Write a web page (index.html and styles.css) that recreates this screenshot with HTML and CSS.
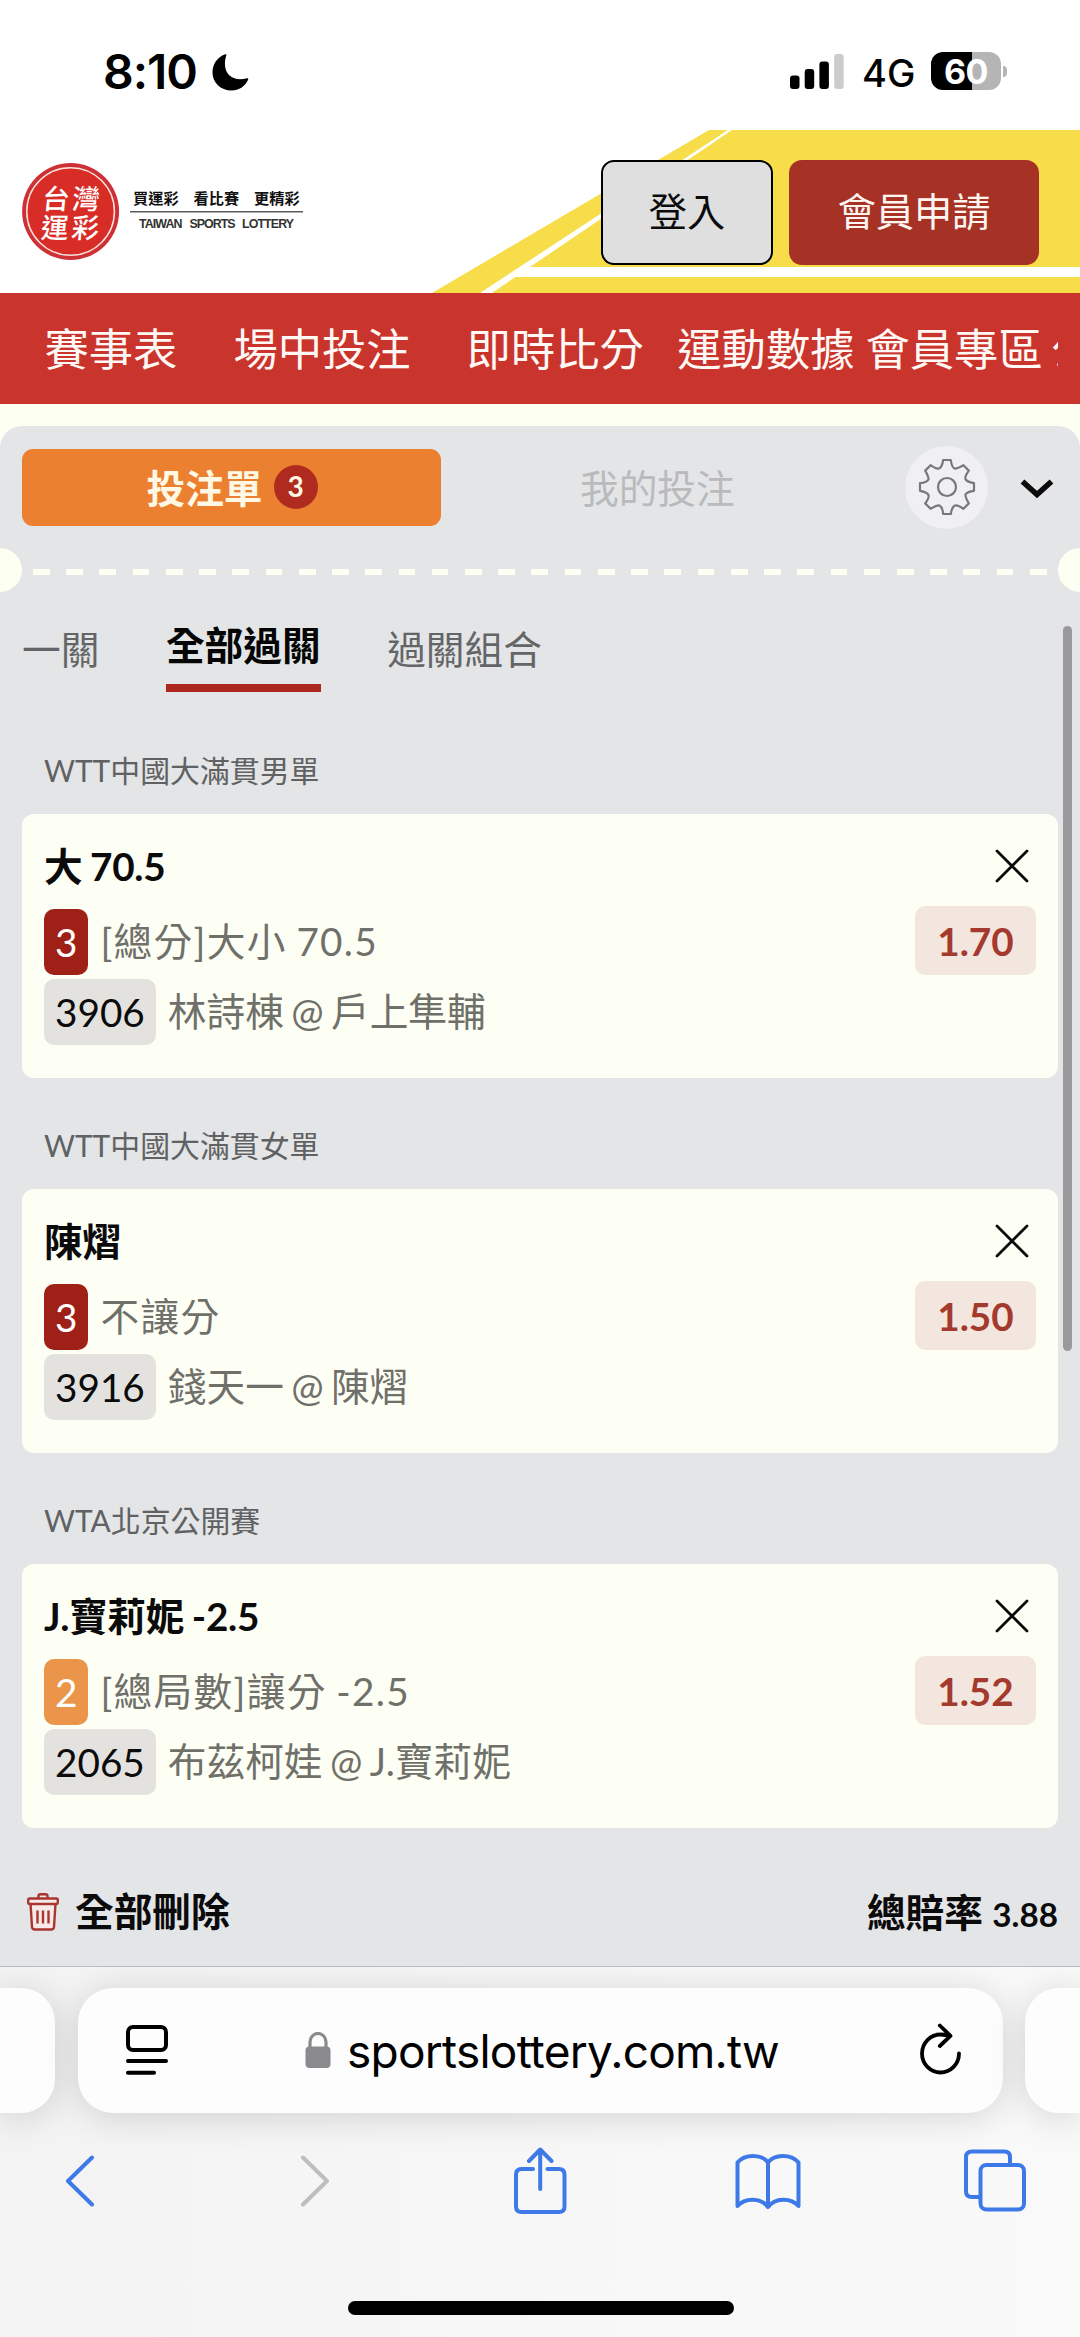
FILE: index.html
```html
<!DOCTYPE html>
<html lang="zh-Hant">
<head>
<meta charset="utf-8">
<title>台灣運彩</title>
<link rel="stylesheet" href="styles.css">
</head>
<body>
<div class="statusbar">
  <div class="clock">8:10</div>
  <svg class="moon" width="37" height="37" viewBox="0 0 37 37"><path d="M14.500.4C9 18 18.500 28.500 35.200 24.200Q36.500 24 36.200 25.500C33 32.500 27 36.500 19.500 36.500C8.500 36.500.5 28.500.5 18.500C.5 10.500 5 3.700 12.500.6Q14.500-.2 14.500.4Z"/></svg>
  <svg class="signal" width="54" height="36" viewBox="0 0 54 36"><rect x="0" y="21.500" width="9.500" height="13.500" rx="3"/><rect x="14.700" y="15" width="9.500" height="20" rx="3"/><rect x="29.400" y="7.500" width="9.500" height="27.500" rx="3"/><rect x="44.200" y="0" width="9.500" height="35" rx="3" fill="#cccccc"/></svg>
  <div class="network">4G</div>
  <div class="battery"><span>60</span></div>
  <div class="battery-tip"></div>
</div>

<header class="header">
  <svg class="stripes" width="1080" height="163" viewBox="0 0 1080 163"><path fill="#f7dd49" d="M709 0H1080V163H432Z"/><path fill="#fffffb" d="M728 0H732L530 137H1080V147H515.500L492 163H480Z"/></svg>
  <svg class="logo" width="290" height="100" viewBox="0 0 290 100">
    <circle cx="48.600" cy="49.500" r="48.500" fill="#cf3036"/>
    <circle cx="48.600" cy="49.500" r="43.800" fill="#d82c26" stroke="#fbe3dc" stroke-width="1.500"/>
    <g class="logo-mark" transform="skewX(-5)"><text x="23.500" y="47">台</text><text x="53.500" y="47">灣</text><text x="25" y="76.500">運</text><text x="55.500" y="76.500">彩</text></g>
    <g class="logo-slogan"><text x="111" y="41.500">買運彩</text><text x="171.500" y="41.500">看比賽</text><text x="232" y="41.500">更精彩</text></g>
    <path d="M108 49.800H281" stroke="#5a5a5a" stroke-width="1.600"/>
    <g class="logo-name"><text x="117" y="65.500" textLength="43.500">TAIWAN</text><text x="167.500" y="65.500" textLength="46">SPORTS</text><text x="220" y="65.500" textLength="52">LOTTERY</text></g>
  </svg>
  <div class="login">登入</div>
  <div class="join">會員申請</div>
</header>

<nav class="nav">
  <div class="nav-scroll">
    <span class="wide">賽事表</span><span class="wide">場中投注</span><span class="mid">即時比分</span><span class="tight">運動數據</span><span class="last">會員專區</span><span>公益</span>
  </div>
</nav>

<main class="slip">
  <div class="slip-head">
    <div class="tab-slip"><span class="tab-label">投注單</span><span class="count">3</span></div>
    <div class="tab-mine">我的投注</div>
    <div class="gear"><svg width="60" height="60" viewBox="-30 -30 60 60" fill="none" stroke="#77787a" stroke-width="2.200" stroke-linejoin="round"><path d="M-3.800-27 3.800-27Q4.600-20 7.500-18.500Q9.600-18 16.400-21.800L21.800-16.400Q17.500-10.500 18.500-8Q19.600-5 27-3.800V3.800Q20 4.600 18.500 7.500Q18 9.600 21.800 16.400L16.400 21.800Q10.500 17.500 8 18.500Q5 19.600 3.800 27H-3.800Q-4.600 20-7.500 18.500Q-9.600 18-16.400 21.800L-21.800 16.400Q-17.500 10.500-18.500 8Q-19.600 5-27 3.800V-3.800Q-20-4.600-18.500-7.500Q-18-9.600-21.800-16.400L-16.400-21.800Q-10.500-17.500-8-18.500Q-5-19.600-3.800-27Z"/><circle r="9"/></svg></div>
    <svg class="chev" width="34" height="22" viewBox="0 0 34 22"><path d="M2.500 3.500 17 16.500 31.500 3.500" fill="none" stroke="#0b0b0c" stroke-width="5.600"/></svg>
  </div>
  <div class="perforation"><i class="notch"></i><i class="dashes"></i><i class="notch right"></i></div>

  <div class="modes"><span>一關</span><span class="active">全部過關</span><span>過關組合</span></div>

  <h2 class="league">WTT中國大滿貫男單</h2>
  <section class="bet">
    <div class="bet-title"><b>大 70.5</b><svg class="close" width="34" height="34" viewBox="0 0 34 34"><path d="M2 2 32 32M32 2 2 32"/></svg></div>
    <div class="bet-row market"><span class="tag red">3</span><span class="text spaced">[總分]大小 70.5</span><span class="odds">1.70</span></div>
    <div class="bet-row"><span class="tag grey">3906</span><span class="text">林詩棟 @ 戶上隼輔</span></div>
  </section>

  <h2 class="league">WTT中國大滿貫女單</h2>
  <section class="bet">
    <div class="bet-title"><b>陳熠</b><svg class="close" width="34" height="34" viewBox="0 0 34 34"><path d="M2 2 32 32M32 2 2 32"/></svg></div>
    <div class="bet-row market"><span class="tag red">3</span><span class="text spaced">不讓分</span><span class="odds">1.50</span></div>
    <div class="bet-row"><span class="tag grey">3916</span><span class="text">錢天一 @ 陳熠</span></div>
  </section>

  <h2 class="league">WTA北京公開賽</h2>
  <section class="bet">
    <div class="bet-title"><b>J.寶莉妮 -2.5</b><svg class="close" width="34" height="34" viewBox="0 0 34 34"><path d="M2 2 32 32M32 2 2 32"/></svg></div>
    <div class="bet-row market"><span class="tag orange">2</span><span class="text spaced">[總局數]讓分 -2.5</span><span class="odds">1.52</span></div>
    <div class="bet-row"><span class="tag grey">2065</span><span class="text">布茲柯娃 @ J.寶莉妮</span></div>
  </section>

  <div class="totals">
    <svg class="trash" width="32" height="38" viewBox="0 0 32 38" fill="none" stroke="#a93531" stroke-width="2.400"><path fill="#f6e9e8" d="M3.500 10.500 5 34Q5.200 36.500 8 36.500H24Q26.800 36.500 27 34L28.500 10.500"/><rect x="1.200" y="5.500" width="29.600" height="5.500" rx="1.500" fill="#f6e9e8"/><path d="M11.500 5.300V3Q11.500 1.200 13.500 1.200H18.500Q20.500 1.200 20.500 3V5.300M10.500 17.500V30.500M16 17.500V30.500M21.500 17.500V30.500"/></svg>
    <b class="clear">全部刪除</b>
    <b class="total">總賠率 <small>3.88</small></b>
  </div>
  <div class="scrollbar"></div>
</main>

<footer class="browser">
  <div class="address-row">
    <div class="pill side"></div>
    <div class="pill address">
      <svg class="reader" width="42" height="52" viewBox="0 0 42 52" fill="none" stroke="#000" stroke-width="4" stroke-linecap="round"><rect x="2" y="2" width="38" height="23" rx="5"/><path d="M2 36H40M2 47.800H28"/></svg>
      <svg class="lock" width="26" height="36" viewBox="0 0 26 36"><rect x=".5" y="14.500" width="25" height="21.500" rx="4" fill="#8a8a8e"/><path d="M5 16V10A8 8.500 0 0 1 21 10V16" fill="none" stroke="#8a8a8e" stroke-width="3.200"/></svg>
      <span class="url">sportslottery.com.tw</span>
      <svg class="reload" width="42" height="52" viewBox="0 0 42 52" fill="none" stroke="#000" stroke-width="3.800" stroke-linecap="round" stroke-linejoin="round"><path d="M39 30.500A18.500 19 0 1 1 20.500 11.500Q26 11.500 30 13.500M19.800 2.500 30.500 12.800 19.800 23"/></svg>
    </div>
    <div class="pill side"></div>
  </div>
  <div class="tools">
    <svg class="back" width="30" height="52" viewBox="0 0 30 52"><path d="M27 2.500 3 26 27 49.500"/></svg>
    <svg class="off" width="30" height="52" viewBox="0 0 30 52"><path d="M3 2.500 27 26 3 49.500"/></svg>
    <svg class="share" width="54" height="68" viewBox="0 0 54 68"><path d="M20 22H8.500Q3 22 3 27.500V59.500Q3 65 8.500 65H46Q51.500 65 51.500 59.500V27.500Q51.500 22 46 22H34.500M27.200 42V3.500M16 14 27.200 2.500 38.500 14"/></svg>
    <svg class="book" width="66" height="56" viewBox="0 0 66 56"><path d="M33 9.500C27 1 10 .5 2.500 9.500V53C10 44.500 26 44.500 33 54C40 44.500 56 44.500 63.500 53V9.500C56 .5 39 1 33 9.500ZM33 9.500V53"/></svg>
    <svg width="62" height="64" viewBox="0 0 62 64"><rect x="16.500" y="16" width="43.500" height="44.500" rx="6"/><path d="M46 15V8Q46 2.500 40.500 2.500H8Q2 2.500 2 8V42.500Q2 48 8 48H15"/></svg>
  </div>
  <div class="home"></div>
</footer>
</body>
</html>
```

FILE: styles.css
```css
* { box-sizing: border-box; }
body {
  margin: 0;
  width: 1080px;
  height: 2337px;
  overflow: hidden;
  display: flex;
  flex-direction: column;
  background: #fefff3;
  font-family: Lato, "Noto Sans CJK TC", sans-serif;
  font-size: 38.700px;
  font-weight: 400;
  color: #0b0b0c;
}
svg { display: block; flex: none; }

/* status bar */
.statusbar {
  height: 130px;
  padding: 52px 73px 0 103px;
  display: flex;
  background: #fff;
  font-family: Inter, sans-serif;
  color: #000;
}
.clock { width: 109px; font-size: 48px; font-weight: 600; line-height: 39px; letter-spacing: -1px; }
.moon { margin-top: 2px; }
.signal { margin: 2px 18px 0 auto; }
.network { width: 69px; font-size: 38px; font-weight: 500; line-height: 42px; }
.battery {
  width: 70px; height: 38px; border-radius: 12px;
  background: linear-gradient(90deg, #000 59%, #b5b5b5 59%);
  color: #fff; font-size: 34px; font-weight: 700; line-height: 39px; text-align: center;
}
.battery span { letter-spacing: -.5px; }
.battery-tip { width: 4px; height: 11px; margin: 14px 0 0 2px; border-radius: 0 5px 5px 0; background: #b5b5b5; }

/* header */
.header { position: relative; height: 163px; flex: none; display: flex; background: #fff; }
.stripes { position: absolute; inset: 0; }
.logo { position: relative; margin: 32px 289px 0 22px; }
.logo-mark text { font: 500 27.500px "Noto Sans CJK TC", sans-serif; fill: #fff; }
.logo-slogan text { font: 700 15.200px "Noto Sans CJK TC", sans-serif; fill: #111; }
.logo-name text { font: 700 12.400px "Liberation Sans", sans-serif; fill: #333; }
.login, .join {
  position: relative; height: 105px; margin-top: 30px; border-radius: 13px;
  line-height: 102px; text-align: center; font-size: 38.200px;
}
.login { width: 172px; border: 2.500px solid #000; background: #dfdfdf; line-height: 99px; }
.join { width: 250px; margin-left: 16px; background: #a63225; color: #fff5f0; }

/* navigation */
.nav { height: 111px; flex: none; padding: 0 22px; background: #c9342c; }
.nav-scroll { display: flex; overflow: hidden; padding-left: 22.500px; font-size: 44.300px; line-height: 111px; color: #fff8f4; white-space: nowrap; }
.wide { margin-right: 56px; }
.mid { margin-right: 33.500px; }
.tight { margin-right: 11px; }
.last { margin-right: 8.500px; }

/* bet slip */
.slip { position: relative; height: 1540px; flex: none; margin-top: 22px; border-radius: 22px 22px 0 0; background: #e4e5e7; overflow: hidden; }
.slip-head { height: 122px; display: flex; align-items: center; padding-left: 22px; }
.tab-slip { width: 419px; height: 77px; display: flex; justify-content: center; align-items: center; padding-left: 1px; border-radius: 11px; background: #ec8031; color: #fff8e4; font-weight: 700; }
.tab-label { margin-bottom: 3px; }
.count { width: 44px; height: 44px; margin-left: 11px; border-radius: 50%; background: #b02b1f; font-size: 28px; line-height: 43px; text-align: center; }
.tab-mine { margin: 0 0 3px 139px; width: 160px; color: #b9babc; }
.gear { width: 83px; height: 83px; margin-left: 165px; padding: 11.500px 12px; border-radius: 50%; background: #f0f0f3; }
.chev { margin-left: 32px; margin-top: 4px; }
.perforation { display: flex; height: 44px; align-items: center; }
.notch { width: 22px; height: 44px; border-radius: 0 22px 22px 0; background: #fefff3; }
.notch.right { border-radius: 22px 0 0 22px; }
.dashes { flex: 1; height: 6px; margin: 4px 11px 0; background: repeating-linear-gradient(90deg, #fefff3 0 16.700px, transparent 16.700px 33.230px); }
.modes { display: flex; height: 110px; padding: 31px 22px 0; line-height: 52px; color: #646567; }
.modes span { margin-right: 66.500px; }
.modes .active { height: 69px; line-height: 44px; border-bottom: 8px solid #ac251f; font-weight: 700; color: #050506; }
.league { margin: 0; height: 111px; padding: 0 44px; font-size: 29.900px; font-weight: 400; line-height: 134px; color: #606163; }
.modes + .league { margin-top: 1px; }
.bet { height: 264px; margin: 0 22px; padding: 22px 22px 0; border-radius: 12px; background: #fefff4; }
.bet-title { display: flex; justify-content: space-between; align-items: center; height: 60px; padding-right: 7px; }
.bet-title b { margin-bottom: 4px; letter-spacing: -.3px; word-spacing: -1.500px; }
.close path { fill: none; stroke: #0b0b0c; stroke-width: 2.800; stroke-linecap: round; }
.bet-row { display: flex; align-items: center; height: 70px; }
.market { margin-top: 11px; }
.tag { height: 66px; padding: 0 11px; border-radius: 10px; line-height: 66px; }
.red { background: #9f2017; color: #fff; }
.orange { background: #ea9549; color: #fff; }
.grey { background: #e3e2de; color: #0b0b0c; }
.text { margin: 0 0 2px 12px; line-height: 60px; color: #70706b; word-spacing: -2.500px; }
.spaced { letter-spacing: 1.300px; word-spacing: -1.500px; }
.odds { width: 121px; height: 69px; margin: 0 0 3px auto; border-radius: 10px; background: #f3e6df; color: #a43a2e; font-weight: 700; line-height: 71px; text-align: center; }
.totals { display: flex; align-items: center; padding: 29px 22px 0 27px; height: 139px; }
.clear { margin: 0 0 7px 16px; }
.total { margin: 0 0 5px auto; }
.total small { font-size: 33.200px; }
.scrollbar { position: absolute; right: 8px; top: 200px; width: 9px; height: 725px; border-radius: 5px; background: #9a9a9d; }

/* browser chrome */
.browser { flex: 1; border-top: 1.500px solid #bbbcbd; background: linear-gradient(90deg, #f3f3f3, #f8f8f8 65%, #f9f9f9); }
.address-row { display: flex; justify-content: space-between; gap: 22.500px; margin: 21px 0 0; height: 125px; }
.pill { background: #fdfdfd; box-shadow: 0 4px 36px rgba(0,0,0,.15); }
.side { width: 55px; border-radius: 0 34px 34px 0; }
.address + .side { border-radius: 34px 0 0 34px; }
.address { flex: 1; display: flex; align-items: center; border-radius: 35px; padding: 0 41px 0 48.500px; }
.lock { margin: -2px 0 0 137px; }
.url { margin: 0 0 0 16px; font: 400 46px/60px Inter, sans-serif; letter-spacing: -.75px; color: #000; white-space: nowrap; }
.reload { margin: -4px 0 0 auto; }
.tools { display: flex; align-items: center; height: 70px; margin: 33px 52px 0 65px; }
.tools path, .tools rect { fill: none; stroke: #3d7ae8; stroke-width: 4; stroke-linecap: round; stroke-linejoin: round; }
.tools .off path { stroke: #bebebf; }
.back { margin-right: 205px; }
.off { margin-right: 183px; }
.share { margin-right: 168px; }
.book { margin-right: 163px; }
.home { width: 386px; height: 14px; margin: 85px 0 0 348px; border-radius: 7px; background: #000; }
```
